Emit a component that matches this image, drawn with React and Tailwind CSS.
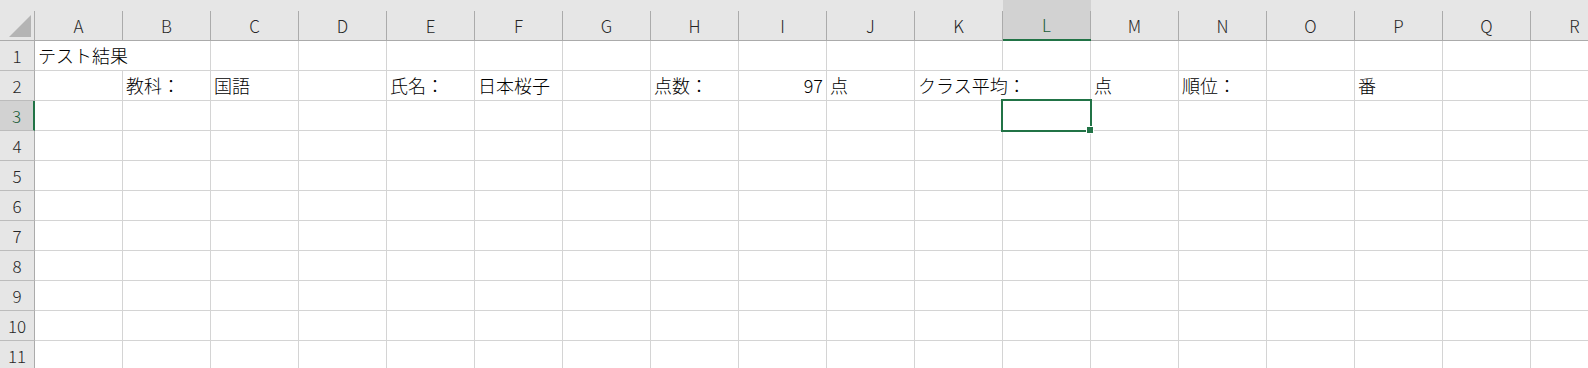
const COLS = ['A', 'B', 'C', 'D', 'E', 'F', 'G', 'H', 'I', 'J', 'K', 'L', 'M', 'N', 'O', 'P', 'Q', 'R'];
const ROWS = [1, 2, 3, 4, 5, 6, 7, 8, 9, 10, 11];

const SEL_COL = 'L';
const SEL_ROW = 3;

// cell values, keyed "row-col"; spill = text runs over into next cell (no gridline)
const cells = {
  '1-A': { v: 'テスト結果', spill: true },
  '2-B': { v: '教科：' },
  '2-C': { v: '国語' },
  '2-E': { v: '氏名：' },
  '2-F': { v: '日本桜子' },
  '2-H': { v: '点数：' },
  '2-I': { v: '97', right: true },
  '2-J': { v: '点' },
  '2-K': { v: 'クラス平均：', spill: true },
  '2-M': { v: '点' },
  '2-N': { v: '順位：' },
  '2-P': { v: '番' },
};

const ColHeader = ({ label, selected }) => (
  <div
    className={`flex w-[88px] shrink-0 h-full ${
      selected ? 'bg-[#d2d2d2] border-b-2 border-[#217346] text-[#185c37]' : 'border-b border-[#ababab] text-[#262626]'
    }`}
  >
    <div className="flex-1 pt-[11px] flex items-center justify-center">{label}</div>
    <div className="w-px mt-[11px] bg-[#ababab]" />
  </div>
);

const Cell = ({ row, col }) => {
  const cell = cells[`${row}-${col}`];
  const selected = row === SEL_ROW && col === SEL_COL;
  return (
    <div
      className={`w-[88px] shrink-0 h-full flex items-center px-[3px] whitespace-nowrap border-b border-[#d4d4d4] ${
        cell?.spill ? '' : 'border-r'
      } ${cell?.right ? 'justify-end' : ''} ${selected ? 'relative' : ''}`}
    >
      {cell?.v}
      {selected && (
        <div className="absolute -left-[2px] -top-[2px] w-[91px] h-[33px] border-2 border-[#217346]">
          <div className="absolute -right-[4px] -bottom-[4px] w-[8px] h-[8px] bg-[#217346] border border-white" />
        </div>
      )}
    </div>
  );
};

export default function App() {
  return (
    <div className="w-[1588px] h-[368px] overflow-hidden bg-white font-['Noto_Sans_CJK_JP','Noto_Sans',sans-serif] font-light text-black">
      {/* column headers */}
      <div className="flex h-[41px] bg-[#e6e6e6] text-[17px]">
        <div className="flex w-[35px] shrink-0 h-full border-b border-[#ababab]">
          <div className="flex-1 flex items-end justify-end pb-[2px] pr-[2px]">
            <svg width="24" height="24" viewBox="0 0 24 24">
              <polygon points="1,23 23,23 23,1" fill="#b4b4b4" />
            </svg>
          </div>
          <div className="w-px mt-[11px] bg-[#ababab]" />
        </div>
        {COLS.map((c) => (
          <ColHeader key={c} label={c} selected={c === SEL_COL} />
        ))}
      </div>

      {/* rows */}
      {ROWS.map((r) => (
        <div key={r} className="flex h-[30px] text-[18px]">
          <div
            className={`w-[35px] shrink-0 h-full flex items-center justify-center text-[17px] border-b border-[#bcbcbc] ${
              r === SEL_ROW
                ? 'bg-[#d2d2d2] border-r-2 border-r-[#217346] text-[#185c37]'
                : 'bg-[#e6e6e6] border-r border-r-[#ababab] text-[#262626]'
            }`}
          >
            {r}
          </div>
          {COLS.map((c) => (
            <Cell key={c} row={r} col={c} />
          ))}
        </div>
      ))}
    </div>
  );
}
